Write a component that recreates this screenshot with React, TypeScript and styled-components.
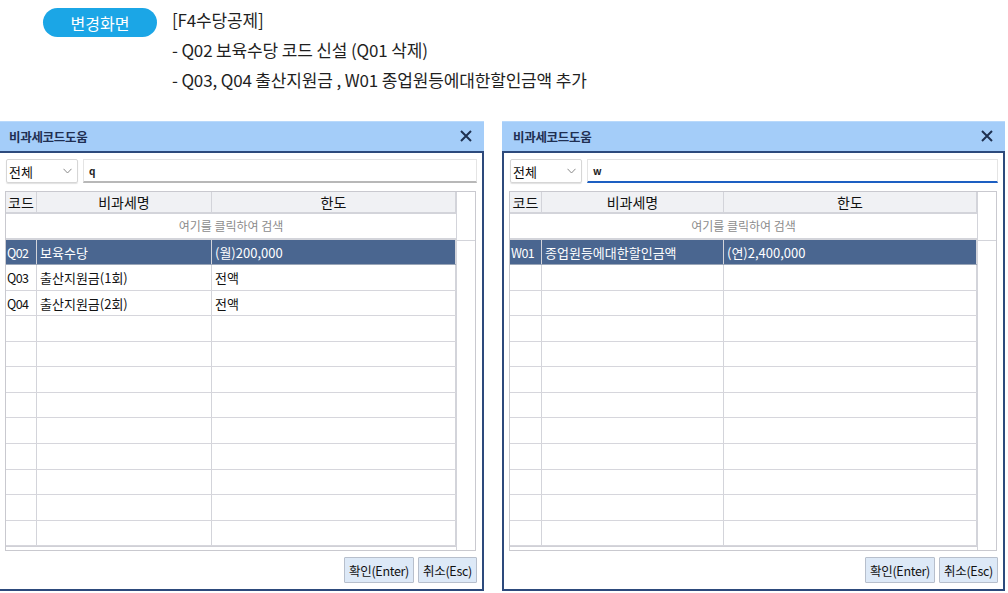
import React from 'react';
import styled, { createGlobalStyle, css } from 'styled-components';

const GlobalStyle = createGlobalStyle`
  html, body {
    margin: 0;
    padding: 0;
    background: #ffffff;
    overflow: hidden;
  }
  body {
    font-family: 'Noto Sans CJK KR', 'Noto Sans', sans-serif;
    color: #222;
  }
`;

type Row = { code: string; name: string; limit: string };

const leftRows: Row[] = [
  { code: 'Q02', name: '보육수당', limit: '(월)200,000' },
  { code: 'Q03', name: '출산지원금(1회)', limit: '전액' },
  { code: 'Q04', name: '출산지원금(2회)', limit: '전액' },
];

const rightRows: Row[] = [
  { code: 'W01', name: '종업원등에대한할인금액', limit: '(연)2,400,000' },
];

const ROW_COUNT = 12;

export default function App() {
  return (
    <Page>
      <GlobalStyle />
      <Notice>
        <Badge>변경화면</Badge>
        <NoticeText>
          <NoticeLine>[F4수당공제]</NoticeLine>
          <NoticeLine>- Q02 보육수당 코드 신설 (Q01 삭제)</NoticeLine>
          <NoticeLine>- Q03, Q04 출산지원금 , W01 종업원등에대한할인금액 추가</NoticeLine>
        </NoticeText>
      </Notice>

      <Dialogs>
        <HelpDialog
          width={486}
          offset={-2}
          cols="31px 175px 1fr"
          query="q"
          rows={leftRows}
        />
        <HelpDialog
          width={503}
          offset={0}
          cols="32px 182px 1fr"
          query="w"
          focused
          rows={rightRows}
        />
      </Dialogs>
    </Page>
  );
}

type DialogProps = {
  width: number;
  offset: number;
  cols: string;
  query: string;
  focused?: boolean;
  rows: Row[];
};

const HelpDialog = ({ width, offset, cols, query, focused, rows }: DialogProps) => {
  const filled = [...rows];
  while (filled.length < ROW_COUNT) filled.push({ code: '', name: '', limit: '' });

  return (
    <Dialog $width={width} $offset={offset}>
      <TitleBar>
        <Title>비과세코드도움</Title>
        <CloseIcon viewBox="0 0 14 14" width="14" height="14">
          <path d="M2 2 L12 12 M12 2 L2 12" stroke="#1e3050" strokeWidth="2" fill="none" />
        </CloseIcon>
      </TitleBar>
      <Body>
        <Toolbar>
          <Select>
            <span>전체</span>
            <Chevron viewBox="0 0 9 6" width="9" height="6">
              <path d="M0.5 0.8 L4.5 5 L8.5 0.8" stroke="#8a8a8a" strokeWidth="1" fill="none" />
            </Chevron>
          </Select>
          <Search $focused={!!focused}>{query}</Search>
        </Toolbar>

        <Grid>
          <Table>
            <HeaderRow $cols={cols}>
              <HeadCell>코드</HeadCell>
              <HeadCell>비과세명</HeadCell>
              <HeadCell>한도</HeadCell>
            </HeaderRow>
            <FilterRow>여기를 클릭하여 검색</FilterRow>
            {filled.map((r, i) => (
              <DataRow key={i} $cols={cols} $selected={i === 0}>
                <CodeCell>{r.code}</CodeCell>
                <Cell>{r.name}</Cell>
                <Cell>{r.limit}</Cell>
              </DataRow>
            ))}
          </Table>
          <ScrollColumn>
            <ScrollHead />
          </ScrollColumn>
        </Grid>

        <Footer>
          <Button>확인(Enter)</Button>
          <Button>취소(Esc)</Button>
        </Footer>
      </Body>
    </Dialog>
  );
};

const Page = styled.div`
  width: 1008px;
  height: 593px;
  overflow: hidden;
`;

const Notice = styled.div`
  display: flex;
  align-items: flex-start;
  gap: 15px;
  padding: 7px 0 0 43px;
  height: 114px;
  box-sizing: border-box;
`;

const Badge = styled.div`
  width: 114px;
  height: 29px;
  border-radius: 15px;
  background: #1ba6e6;
  color: #ffffff;
  font-size: 16px;
  display: flex;
  align-items: center;
  justify-content: center;
  margin-top: 1px;
`;

const NoticeText = styled.div`
  display: flex;
  flex-direction: column;
  margin-top: -2px;
`;

const NoticeLine = styled.div`
  font-size: 17px;
  line-height: 30px;
  color: #1f1f1f;
  letter-spacing: -0.15px;
  white-space: nowrap;
`;

const Dialogs = styled.div`
  display: flex;
  gap: 18px;
  padding-top: 7px;
`;

const Dialog = styled.div<{ $width: number; $offset: number }>`
  width: ${(p) => p.$width}px;
  margin-left: ${(p) => p.$offset}px;
  display: flex;
  flex-direction: column;
  font-family: 'Noto Sans CJK KR', sans-serif;
`;

const TitleBar = styled.div`
  height: 30px;
  background: #a4cdf9;
  display: flex;
  align-items: center;
  justify-content: space-between;
  padding: 0 11px 0 11px;
  box-shadow: inset 0 1px 0 #b9d9fb;
`;

const Title = styled.span`
  font-size: 12.5px;
  font-weight: 700;
  color: #1f2f52;
  letter-spacing: -0.3px;
`;

const CloseIcon = styled.svg`
  display: block;
`;

const Body = styled.div`
  border: 2px solid #2d4a7c;
  background: #ffffff;
  padding: 6px 5px 6px 5px;
  display: flex;
  flex-direction: column;
`;

const Toolbar = styled.div`
  display: flex;
  gap: 5px;
  height: 24px;
  margin-bottom: 8px;
  padding-left: 1px;
`;

const Select = styled.div`
  width: 72px;
  box-sizing: border-box;
  border: 1px solid #d6d6d6;
  border-radius: 2px;
  box-shadow: 0 1px 1px rgba(0, 0, 0, 0.12);
  display: flex;
  align-items: center;
  justify-content: space-between;
  padding: 0 5px 0 2px;
  font-size: 13px;
  color: #111;
`;

const Chevron = styled.svg`
  display: block;
`;

const Search = styled.div<{ $focused: boolean }>`
  flex: 1;
  box-sizing: border-box;
  border: 1px solid #e4e4e4;
  border-bottom: ${(p) => (p.$focused ? '2px solid #1d5fc2' : '2px solid #b8b8b8')};
  display: flex;
  align-items: center;
  padding-left: 5px;
  font-size: 10px;
  font-weight: 700;
  color: #222;
`;

const Grid = styled.div`
  height: 360px;
  box-sizing: border-box;
  border: 1px solid #c9c9cf;
  display: flex;
  overflow: hidden;
  margin-right: 1px;
`;

const Table = styled.div`
  flex: 1;
  display: flex;
  flex-direction: column;
  border-bottom: 1px solid #d0d0d6;
  height: 354px;
`;

const rowGrid = css<{ $cols: string }>`
  display: grid;
  grid-template-columns: ${(p) => p.$cols};
`;

const HeaderRow = styled.div<{ $cols: string }>`
  ${rowGrid};
  height: 22px;
  background: #f0f1f4;
  border-bottom: 2px solid #d3d4da;
  box-sizing: border-box;
`;

const HeadCell = styled.div`
  font-size: 14px;
  color: #111;
  display: flex;
  align-items: center;
  justify-content: center;
  border-right: 1px solid #d3d4da;
  line-height: 1;
`;

const FilterRow = styled.div`
  height: 26px;
  box-sizing: border-box;
  border-bottom: 2px solid #d3d4da;
  display: flex;
  align-items: center;
  justify-content: center;
  font-size: 12px;
  color: #8c8c8c;
`;

const DataRow = styled.div<{ $cols: string; $selected: boolean }>`
  ${rowGrid};
  height: 25.6px;
  box-sizing: border-box;
  border-bottom: 1px solid ${(p) => (p.$selected ? '#9aa6b8' : '#d6d6dc')};
  background: ${(p) => (p.$selected ? '#4a6690' : '#ffffff')};
  color: ${(p) => (p.$selected ? '#ffffff' : '#111111')};
`;

const Cell = styled.div`
  font-size: 13px;
  display: flex;
  align-items: center;
  padding-left: 3px;
  border-right: 1px solid #d3d4da;
  white-space: nowrap;
  overflow: hidden;
`;

const CodeCell = styled(Cell)`
  padding-left: 1px;
  font-size: 12.5px;
  letter-spacing: -0.6px;
`;

const ScrollColumn = styled.div`
  width: 18px;
  border-left: 1px solid #d3d4da;
  background: #ffffff;
`;

const ScrollHead = styled.div`
  height: 48px;
  border-bottom: 1px solid #d3d4da;
`;

const Footer = styled.div`
  display: flex;
  justify-content: flex-end;
  gap: 4px;
  margin-top: 6px;
  height: 26px;
`;

const Button = styled.button`
  font-family: 'Noto Sans CJK KR', sans-serif;
  font-size: 12.5px;
  color: #111;
  background: #dde9f7;
  border: 1px solid #b7bfcc;
  border-radius: 1px;
  padding: 0 4px;
  height: 26px;
  letter-spacing: -0.3px;
  cursor: pointer;
`;
